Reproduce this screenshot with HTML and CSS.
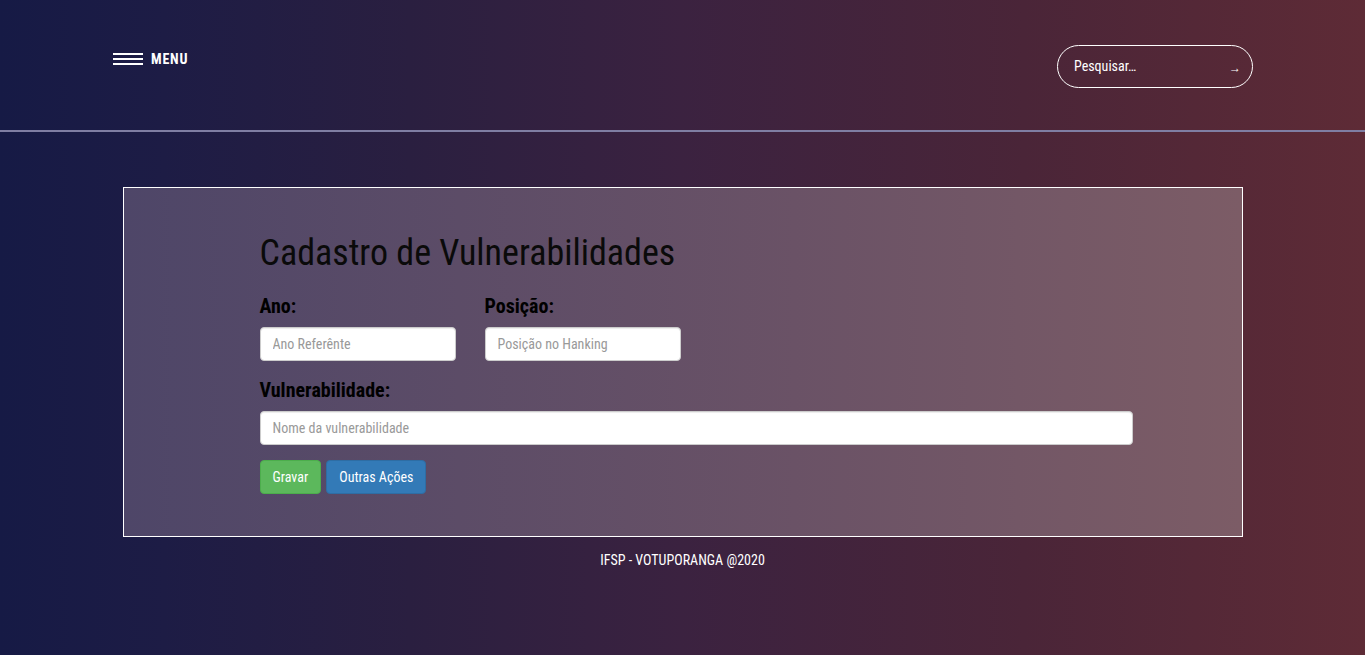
FILE: index.html
```html
<!DOCTYPE html>
<html lang="pt-BR">
<head>
<meta charset="utf-8">
<title>Cadastro de Vulnerabilidades</title>
<link rel="stylesheet" href="styles.css">
</head>
<body>
<header class="topbar">
  <div class="topbar-inner">
    <a class="menu" href="#">
      <span class="burger"><i></i><i></i><i></i></span>
      <span class="menu-text">MENU</span>
    </a>
    <div class="search">
      <span class="search-text">Pesquisar…</span>
      <span class="search-arrow">&rarr;</span>
    </div>
  </div>
</header>
<main class="main">
  <section class="card">
    <h1 class="title">Cadastro de Vulnerabilidades</h1>
    <div class="row">
      <div class="field">
        <label class="label">Ano:</label>
        <input class="input" type="text" placeholder="Ano Referênte">
      </div>
      <div class="field">
        <label class="label">Posição:</label>
        <input class="input" type="text" placeholder="Posição no Hanking">
      </div>
    </div>
    <div class="field wide">
      <label class="label">Vulnerabilidade:</label>
      <input class="input" type="text" placeholder="Nome da vulnerabilidade">
    </div>
    <div class="actions">
      <button class="btn btn-green">Gravar</button>
      <button class="btn btn-blue">Outras Ações</button>
    </div>
  </section>
  <footer class="footer">IFSP - VOTUPORANGA @2020</footer>
</main>
</body>
</html>
```
FILE: styles.css
```css
* { box-sizing: border-box; }
html, body { margin: 0; height: 100%; }
body {
  font-family: "Roboto Condensed", "Roboto", "Liberation Sans Narrow", sans-serif;
  font-stretch: condensed;
  background: linear-gradient(to right, #161a45 0%, #1d1c45 12%, #2a1f40 30%, #3b2240 50%, #4a2538 75%, #5e2b36 100%);
  color: #fff;
  min-height: 655px;
}
.topbar {
  height: 132px;
  border-bottom: 2px solid #7f7ea3;
}
.topbar-inner {
  display: flex;
  justify-content: space-between;
  align-items: flex-start;
  padding: 45px 112px 0 113px;
}
.menu {
  display: flex;
  align-items: center;
  gap: 8px;
  color: #fff;
  text-decoration: none;
  margin-top: 6px;
}
.burger {
  display: flex;
  flex-direction: column;
  gap: 3px;
  width: 30px;
}
.burger i {
  display: block;
  height: 2px;
  background: #fff;
}
.menu-text {
  font-weight: 700;
  font-size: 14px;
  letter-spacing: 0.8px;
}
.search {
  width: 196px;
  height: 43px;
  border: 1px solid #fff;
  border-radius: 22px;
  display: flex;
  align-items: center;
  justify-content: space-between;
  padding: 0 11px 0 16px;
  font-size: 14px;
}
.search-text { margin-top: -2px; }
.search-arrow { font-size: 12px; margin-top: 2px; }
.main {
  padding-top: 55px;
  display: flex;
  flex-direction: column;
  align-items: center;
}
.card {
  width: 1120px;
  height: 350px;
  border: 1px solid #fff;
  background: linear-gradient(to right, #4e4668, #6a5266 60%, #7c5c66);
  padding: 46px 109px 0 136px;
  color: #000;
}
.title {
  margin: 0 0 20px;
  font-weight: 400;
  font-size: 36px;
  line-height: 1.1;
  color: #0a0a0a;
}
.row {
  display: flex;
  gap: 29px;
}
.field {
  display: flex;
  flex-direction: column;
  width: 196px;
}
.field.wide { width: auto; margin-top: 17px; }
.label {
  font-weight: 700;
  font-size: 20px;
  line-height: 24px;
  margin-bottom: 9px;
  color: #000;
}
.input {
  height: 34px;
  border: 1px solid #ccc;
  border-radius: 4px;
  background: #fff;
  padding: 6px 12px;
  font-family: inherit;
  font-stretch: condensed;
  font-size: 14px;
  color: #555;
  box-shadow: inset 0 1px 1px rgba(0,0,0,.075);
}
.input::placeholder { color: #999; }
.actions {
  display: flex;
  gap: 5px;
  margin-top: 15px;
}
.btn {
  height: 34px;
  padding: 6px 12px;
  font-family: inherit;
  font-stretch: condensed;
  font-size: 14px;
  color: #fff;
  border: 1px solid transparent;
  border-radius: 4px;
}
.btn-green { background: #5cb85c; border-color: #4cae4c; }
.btn-blue { background: #337ab7; border-color: #2e6da4; }
.footer {
  margin-top: 15px;
  font-size: 14px;
  color: #fff;
}
```
